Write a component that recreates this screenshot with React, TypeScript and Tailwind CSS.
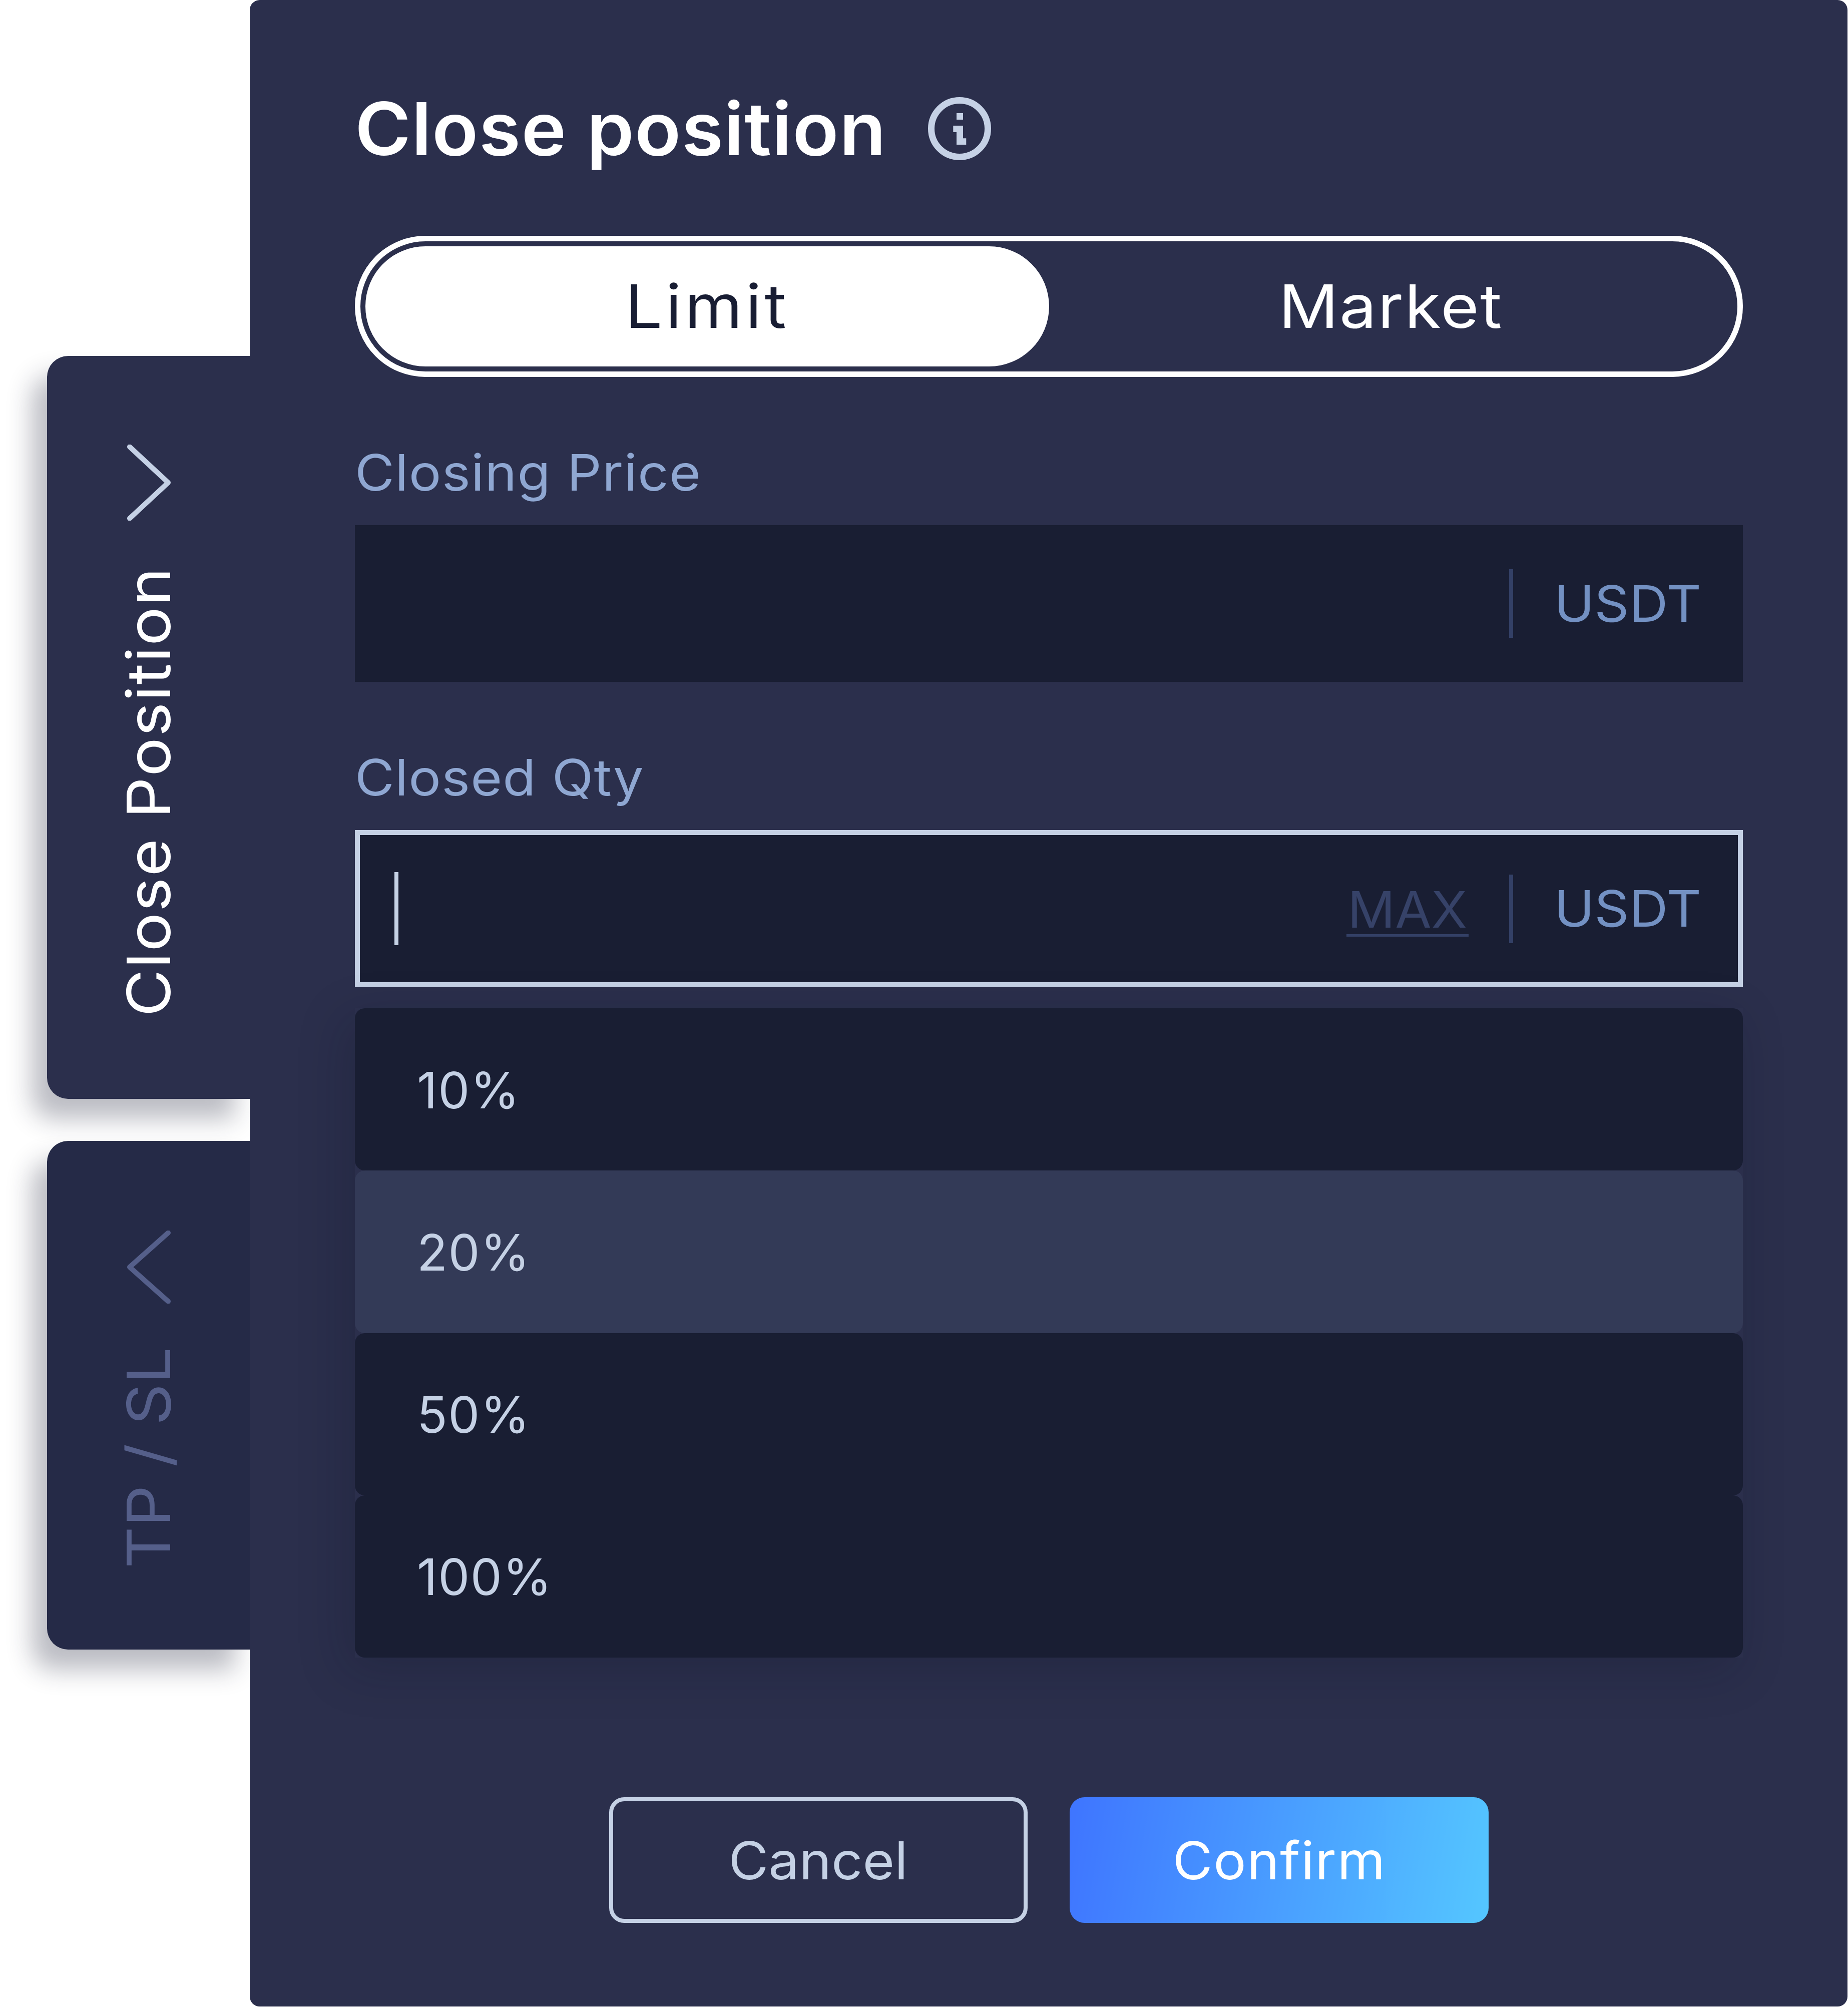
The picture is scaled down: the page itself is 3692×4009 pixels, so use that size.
export default function App() {
  const rows = [
    { label: "10%", bg: "bg-[#191e33]" },
    { label: "20%", bg: "bg-[#333a57]" },
    { label: "50%", bg: "bg-[#191e33]" },
    { label: "100%", bg: "bg-[#191e33]" },
  ];
  return (
    <div className="flex h-[4009px] w-[3692px] overflow-hidden bg-white font-[family-name:Inter,sans-serif]">
      <div className="ml-[94px] flex w-[405px] shrink-0 flex-col pt-[711px]">
        <div className="flex h-[1484px] flex-col items-center rounded-l-[42px] bg-[#2b2f4c] pt-[177px] shadow-[-30px_40px_50px_rgba(30,34,56,0.3)]">
          <svg width="90" height="152" viewBox="0 0 90 152" fill="none" stroke="#c5d1e5" strokeWidth="10" strokeLinecap="round" strokeLinejoin="round">
            <path d="M7 4.500 84 76 7 147.500" />
          </svg>
          <div className="mt-[125px] scale-y-[1.08] rotate-180 text-[120px] leading-[130px] tracking-[1.800px] whitespace-nowrap text-white [writing-mode:vertical-rl]">
            Close Position
          </div>
        </div>
        <div className="mt-[84px] flex h-[1016px] flex-col items-center rounded-l-[42px] bg-[#252a47] pt-[179px] shadow-[-30px_40px_50px_rgba(30,34,56,0.3)]">
          <svg width="90" height="146" viewBox="0 0 90 146" fill="none" stroke="#555f8a" strokeWidth="10" strokeLinecap="round" strokeLinejoin="round">
            <path d="M84 4.500 7 73 84 141.500" />
          </svg>
          <div className="mt-[103px] scale-y-[1.08] rotate-180 text-[120px] leading-[130px] whitespace-nowrap text-[#555f8a] [writing-mode:vertical-rl]">
            TP / SL
          </div>
        </div>
      </div>

      <div className="relative z-10 h-[4008px] w-[3192px] shrink-0 rounded-[20px] bg-[#2b2f4c] pt-[184px] pr-[209px] pl-[210px]">
        <div className="flex h-[146px] items-center">
          <h1 className="w-[1145px] origin-left scale-x-[1.04] text-[146px] leading-[146px] font-semibold tracking-[1.200px] whitespace-nowrap text-white">
            Close position
          </h1>
          <svg width="126" height="126" viewBox="0 0 126 126" fill="none">
            <circle cx="63" cy="63" r="56.5" stroke="#c5d1e5" strokeWidth="13" />
            <path d="M57 32h13v13H57zM50.300 57H70v25.300h6.300V95H57V70H50.300z" fill="#c5d1e5" />
          </svg>
        </div>

        <div className="mt-[141px] grid h-[282px] grid-cols-2 rounded-full border-[11px] border-white p-[10px] text-[120px] leading-[120px]">
          <div className="flex items-center justify-center rounded-full bg-white tracking-[5.500px] text-[#181d33]">
            <span className="inline-block scale-x-[1.1]">Limit</span>
          </div>
          <div className="flex items-center justify-center tracking-[2px] text-white">
            <span className="inline-block scale-x-[1.1]">Market</span>
          </div>
        </div>

        <div className="mt-[141px] origin-left scale-x-[1.08] text-[100px] leading-[100px] tracking-[1.200px] text-[#8fa7d2]">Closing Price</div>
        <div className="mt-[55px] flex h-[313px] items-center justify-end bg-[#191e33] pr-[83px]">
          <div className="h-[137px] w-[8px] bg-[#334066]" />
          <div className="ml-[87px] w-[289px] origin-right scale-x-[1.08] text-right text-[100px] leading-[100px] text-[#7391c3]">USDT</div>
        </div>

        <div className="mt-[141px] origin-left scale-x-[1.08] text-[100px] leading-[100px] tracking-[1px] text-[#8fa7d2]">Closed Qty</div>
        <div className="mt-[55px] flex h-[314px] items-center border-[10px] border-[#c5d1e5] bg-[#191e33] pr-[73px]">
          <div className="ml-[69px] h-[146px] w-[8px] bg-[#c5d1e5]" />
          <div className="mt-[8px] ml-auto w-[244px] border-b-[5px] border-[#334066] text-center text-[100px] leading-[99px] text-[#364268]">
            <span className="inline-block scale-x-[1.05]">MAX</span>
          </div>
          <div className="ml-[81px] h-[137px] w-[8px] bg-[#334066]" />
          <div className="ml-[87px] w-[289px] origin-right scale-x-[1.08] text-right text-[100px] leading-[100px] text-[#7391c3]">USDT</div>
        </div>

        <div className="mt-[42px] flex flex-col shadow-[-16px_24px_90px_rgba(15,18,35,0.22)]">
          {rows.map((row) => (
            <div key={row.label} className={`flex h-[324.25px] items-center rounded-[20px] pt-[3px] pl-[124px] text-[100px] tracking-[1.500px] text-[#c5d1e5] ${row.bg}`}>
              {row.label}
            </div>
          ))}
        </div>

        <div className="mt-[279px] flex justify-center gap-[84px] text-[104px] leading-[104px]">
          <div className="flex h-[251px] w-[836px] items-center justify-center rounded-[30px] border-[8px] border-[#c5d1e5] text-[#c5d1e5]">
            <span className="inline-block scale-x-[1.05]">Cancel</span>
          </div>
          <div className="flex h-[251px] w-[837px] items-center justify-center rounded-[30px] bg-[linear-gradient(100deg,#3f75ff,#54c6ff)] tracking-[1.500px] text-white">
            <span className="inline-block scale-x-[1.05]">Confirm</span>
          </div>
        </div>
      </div>
    </div>
  );
}
